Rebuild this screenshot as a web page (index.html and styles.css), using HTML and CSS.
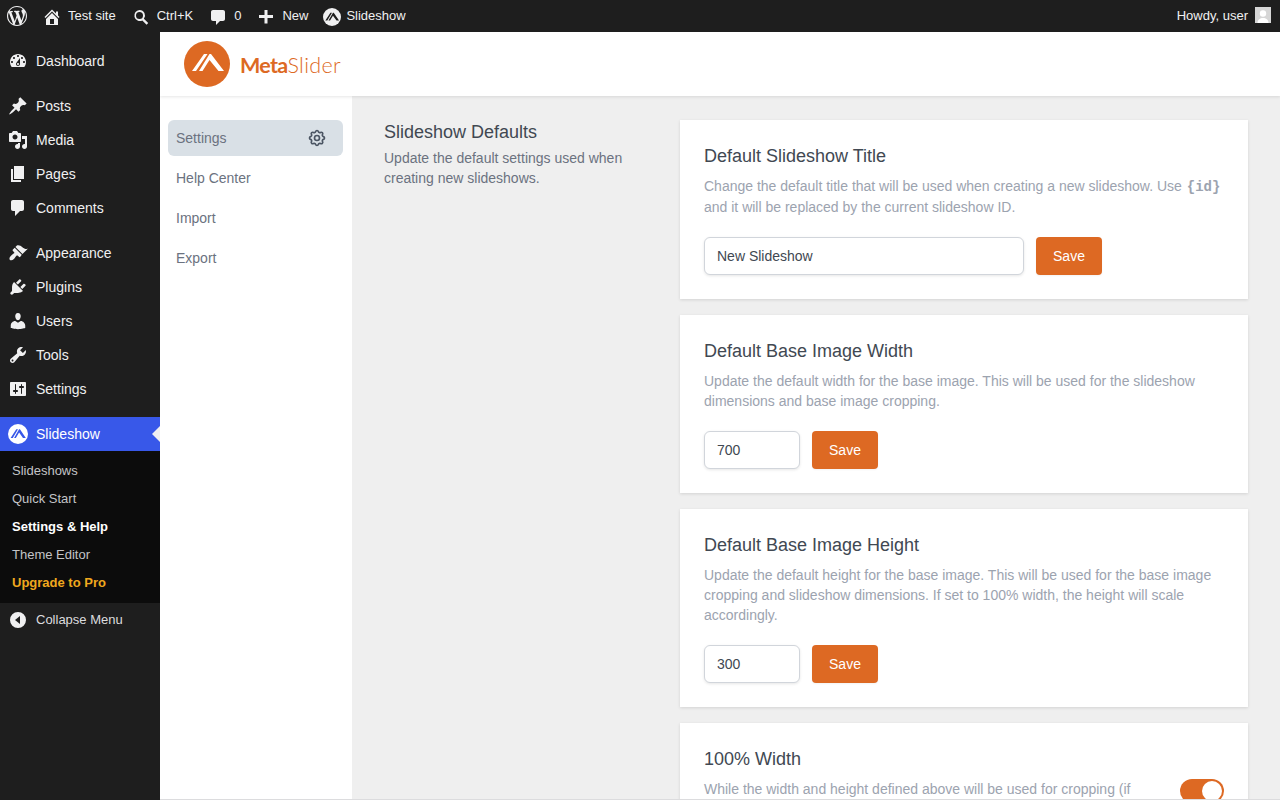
FILE: index.html
```html
<!DOCTYPE html>
<html lang="en">
<head>
<meta charset="utf-8">
<title>MetaSlider Settings</title>
<link rel="stylesheet" href="styles.css">
</head>
<body>
<header class="adminbar">
  <div class="bar-group">
    <span class="bar-item bar-wp"><svg class="ico" width="20" height="20" viewBox="0 0 20 20"><path d="M20 10c0-5.51-4.49-10-10-10C4.48 0 0 4.49 0 10c0 5.52 4.48 10 10 10 5.51 0 10-4.48 10-10zM7.78 15.37L4.37 6.22c.55-.02 1.17-.08 1.17-.08.5-.06.44-1.13-.06-1.11 0 0-1.45.11-2.37.11-.18 0-.37 0-.58-.01C4.12 2.69 6.87 1.11 10 1.11c2.33 0 4.45.87 6.05 2.34-.68-.11-1.65.39-1.65 1.58 0 .74.45 1.36.9 2.1.35.61.55 1.36.55 2.46 0 1.49-1.4 5-1.4 5l-3.03-8.37c.54-.02.82-.17.82-.17.5-.05.44-1.25-.06-1.22 0 0-1.44.12-2.38.12-.87 0-2.33-.12-2.33-.12-.5-.03-.56 1.2-.06 1.22l.92.08 1.26 3.41zM17.41 10c.24-.64.74-1.87.43-4.25.7 1.29 1.05 2.71 1.05 4.25 0 3.29-1.73 6.24-4.4 7.78.97-2.59 1.94-5.2 2.92-7.78zM6.1 18.09C3.12 16.65 1.11 13.53 1.11 10c0-1.3.23-2.48.72-3.59C3.25 10.3 4.67 14.2 6.1 18.09zm4.03-6.63l2.58 6.98c-.86.29-1.76.45-2.71.45-.79 0-1.57-.11-2.29-.33.81-2.38 1.62-4.74 2.42-7.1z"/></svg></span>
    <span class="bar-item"><svg class="ico" width="20" height="20" viewBox="0 0 20 20"><path d="M16 8.5l1.53 1.53-1.06 1.06L10 4.62l-6.47 6.47-1.06-1.06L10 2.5l4 4v-2h2v4zm-6-2.46l6 5.99V18H4v-5.97zM12 17v-5H8v5h4z"/></svg>Test site</span>
    <span class="bar-item"><svg class="ico" width="20" height="20" viewBox="0 0 20 20"><path d="M8.5 3a5.5 5.5 0 0 1 4.4 8.8l4.3 4.3-1.6 1.6-4.3-4.3A5.5 5.5 0 1 1 8.5 3zm0 2a3.5 3.5 0 1 0 0 7 3.5 3.5 0 0 0 0-7z"/></svg>Ctrl+K</span>
    <span class="bar-item"><svg class="ico" width="20" height="20" viewBox="0 0 20 20"><path d="M5 3h10c1.100 0 2 .9 2 2v7c0 1.100-.9 2-2 2h-3l-4 4v-4H5c-1.100 0-2-.9-2-2V5c0-1.100.9-2 2-2z"/></svg>0</span>
    <span class="bar-item"><svg class="ico" width="20" height="20" viewBox="0 0 20 20"><path d="M17 8v3h-5.500v5.500h-3V11H3V8h5.500V3h3v5H17z"/></svg>New</span>
    <span class="bar-item bar-ms"><svg class="ico" width="18" height="18" viewBox="0 0 46 46"><circle cx="23" cy="23" r="23"/><path class="cut-dark" d="M6 32 19 12h4L11 32zM14 32 25.500 12h2L41 32h-6.500L25.500 19.500 18 32z"/></svg>Slideshow</span>
  </div>
  <div class="bar-group">
    <span class="bar-item bar-howdy">Howdy, user<span class="avatar"><svg width="16" height="16" viewBox="0 0 16 16"><rect width="16" height="16" fill="#d6d6d6"/><circle cx="8" cy="6.500" r="3.200" fill="#fff"/><path d="M2.500 16c0-3.500 2.500-5 5.500-5s5.500 1.500 5.500 5z" fill="#fff"/></svg></span></span>
  </div>
</header>
<div class="shell">
  <nav class="sidebar">
    <ul class="menu">
      <li class="menu-item"><svg class="mi" width="20" height="20" viewBox="0 0 20 20"><path d="M3.760 16h12.480c1.100-1.370 1.760-3.110 1.760-5 0-4.420-3.580-8-8-8s-8 3.580-8 8c0 1.890.66 3.630 1.760 5zM10 4c.55 0 1 .45 1 1s-.45 1-1 1-1-.45-1-1 .45-1 1-1zM6 6c.55 0 1 .45 1 1s-.45 1-1 1-1-.45-1-1 .45-1 1-1zm8 0c.55 0 1 .45 1 1s-.45 1-1 1-1-.45-1-1 .45-1 1-1zm-5.370 5.550L12 7v6c0 1.100-.9 2-2 2s-2-.9-2-2c0-.57.24-1.080.63-1.450zM4 10c.55 0 1 .45 1 1s-.45 1-1 1-1-.45-1-1 .45-1 1-1zm12 0c.55 0 1 .45 1 1s-.45 1-1 1-1-.45-1-1 .45-1 1-1zm-5 3c0-.55-.45-1-1-1s-1 .45-1 1 .45 1 1 1 1-.45 1-1z"/></svg>Dashboard</li>
      <li class="menu-sep"></li>
      <li class="menu-item"><svg class="mi" width="20" height="20" viewBox="0 0 20 20"><path d="M10.440 3.020l1.820-1.820 6.360 6.350-1.830 1.820c-1.050-.68-2.480-.57-3.410.36l-.75.75c-.92.93-1.040 2.350-.35 3.410l-1.830 1.820-2.410-2.410-2.800 2.790c-.42.42-3.380 2.710-3.800 2.290s1.860-3.390 2.280-3.810l2.790-2.790L4.100 9.360l1.830-1.820c1.050.69 2.480.57 3.400-.36l.75-.75c.93-.92 1.050-2.350.36-3.410z"/></svg>Posts</li>
      <li class="menu-item"><svg class="mi" width="20" height="20" viewBox="0 0 20 20"><path fill-rule="evenodd" d="M13 11V4c0-.55-.45-1-1-1h-1.670L9 1H5L3.670 3H2c-.55 0-1 .45-1 1v7c0 .55.45 1 1 1h10c.55 0 1-.45 1-1zM7 4.500c1.380 0 2.500 1.120 2.500 2.500S8.380 9.500 7 9.500 4.500 8.380 4.500 7 5.620 4.500 7 4.500zM14 6h5v10.500c0 1.380-1.120 2.500-2.500 2.500S14 17.880 14 16.500s1.120-2.500 2.500-2.500c.17 0 .34.02.5.05V9h-3V6zm-4 8.050V13h2v3.500c0 1.380-1.120 2.500-2.500 2.500S7 17.880 7 16.500 8.120 14 9.500 14c.17 0 .34.02.5.05z"/></svg>Media</li>
      <li class="menu-item"><svg class="mi" width="20" height="20" viewBox="0 0 20 20"><path d="M6 15V2h10v13H6zm-1 1h8v2H3V5h2v11z"/></svg>Pages</li>
      <li class="menu-item"><svg class="mi" width="20" height="20" viewBox="0 0 20 20"><path d="M5 2h9c1.100 0 2 .9 2 2v7c0 1.100-.9 2-2 2h-2l-5 5v-5H5c-1.100 0-2-.9-2-2V4c0-1.100.9-2 2-2z"/></svg>Comments</li>
      <li class="menu-sep"></li>
      <li class="menu-item"><svg class="mi" width="20" height="20" viewBox="0 0 20 20"><path d="M14.480 11.060L7.410 3.990l1.500-1.500c.5-.56 2.300-.47 3.510.32 1.210.8 1.430 1.280 2.910 2.100 1.180.64 2.450 1.260 4.450.85zm-.71.71L6.700 4.700 4.930 6.470c-.39.39-.39 1.020 0 1.410l1.060 1.060c.39.39.39 1.030 0 1.420-.6.6-1.430 1.110-2.210 1.690-.35.26-.7.53-1.010.84-1.340 1.340-1.770 3.070-.85 3.990.92.92 2.650.49 3.990-.85.31-.31.58-.66.84-1.010.58-.78 1.090-1.610 1.690-2.210.39-.39 1.030-.39 1.420 0l1.060 1.060c.39.39 1.020.39 1.410 0z"/></svg>Appearance</li>
      <li class="menu-item"><svg class="mi" width="20" height="20" viewBox="0 0 20 20"><path d="M13.110 4.360L9.870 7.600 8 5.730l3.240-3.240c.35-.34 1.050-.2 1.560.32.52.51.66 1.210.31 1.550zm-8 1.770l.91-1.120 9.010 9.010-1.190.84c-.71.71-2.630 1.160-3.820 1.160H6.140L4.900 17.260c-.59.59-1.540.59-2.120 0-.59-.58-.59-1.530 0-2.120l1.240-1.240v-3.880c0-1.130.4-3.190 1.090-3.890zm7.260 3.970l3.240-3.240c.34-.35 1.040-.21 1.550.31.52.51.66 1.210.31 1.550l-3.240 3.250z"/></svg>Plugins</li>
      <li class="menu-item"><svg class="mi" width="20" height="20" viewBox="0 0 20 20"><path d="M10 9.250c-2.270 0-2.730-3.440-2.730-3.440C7 4.020 7.820 2 9.970 2c2.160 0 2.980 2.020 2.710 3.810 0 0-.41 3.440-2.680 3.440zm0 2.570L12.720 10c2.390 0 4.520 2.330 4.520 4.530v2.490s-3.650 1.130-7.240 1.130c-3.650 0-7.240-1.130-7.240-1.130v-2.490c0-2.250 1.940-4.480 4.470-4.480z"/></svg>Users</li>
      <li class="menu-item"><svg class="mi" width="20" height="20" viewBox="0 0 20 20"><path d="M16.680 9.770c-1.340 1.340-3.300 1.670-4.950.99l-5.410 6.520c-.99.99-2.590.99-3.580 0s-.99-2.590 0-3.570l6.520-5.420c-.68-1.650-.35-3.610.99-4.950 1.280-1.280 3.120-1.620 4.720-1.060l-2.890 2.890 2.820 2.820 2.860-2.870c.53 1.580.18 3.390-1.080 4.650zM3.810 16.210c.4.39 1.040.39 1.430 0 .4-.4.4-1.040 0-1.430-.39-.4-1.030-.4-1.430 0-.39.39-.39 1.030 0 1.430z"/></svg>Tools</li>
      <li class="menu-item"><svg class="mi" width="20" height="20" viewBox="0 0 20 20"><path d="M18 16V4c0-.55-.45-1-1-1H3c-.55 0-1 .45-1 1v12c0 .55.45 1 1 1h14c.55 0 1-.45 1-1zM8 11h1c.55 0 1 .45 1 1s-.45 1-1 1H8v1.500c0 .28-.22.5-.5.5s-.5-.22-.5-.5V13H6c-.55 0-1-.45-1-1s.45-1 1-1h1V5.500c0-.28.22-.5.5-.5s.5.22.5.5V11zm5-2h-1c-.55 0-1-.45-1-1s.45-1 1-1h1V5.500c0-.28.22-.5.5-.5s.5.22.5.5V7h1c.55 0 1 .45 1 1s-.45 1-1 1h-1v5.500c0 .28-.22.5-.5.5s-.5-.22-.5-.5V9z"/></svg>Settings</li>
      <li class="menu-sep"></li>
      <li class="menu-item is-current"><svg class="mi" width="20" height="20" viewBox="0 0 46 46"><circle cx="23" cy="23" r="23"/><path class="cut-blue" d="M6 32 19 12h4L11 32zM14 32 25.500 12h2L41 32h-6.500L25.500 19.500 18 32z"/></svg>Slideshow</li>
    </ul>
    <ul class="submenu">
      <li class="sub-item">Slideshows</li>
      <li class="sub-item">Quick Start</li>
      <li class="sub-item is-active">Settings &amp; Help</li>
      <li class="sub-item">Theme Editor</li>
      <li class="sub-item is-upgrade">Upgrade to Pro</li>
    </ul>
    <div class="collapse"><svg class="mi" width="20" height="20" viewBox="0 0 20 20"><path d="M10 2a8 8 0 1 1 0 16 8 8 0 0 1 0-16zm2 4-5 4 5 4z"/></svg>Collapse Menu</div>
  </nav>
  <main class="main">
    <div class="topbar">
      <svg width="46" height="46" viewBox="0 0 46 46"><circle cx="23" cy="23" r="23" fill="#dd6923"/><path fill="#fff" d="M8 30 20 13h3.500L12 30zM15 30 25.500 13H27l13 17h-5.500L25.500 19 18.500 30z"/></svg>
      <span class="brand"><b>Meta</b>Slider</span>
    </div>
    <div class="body">
      <aside class="subnav">
        <div class="subnav-item is-selected">Settings<svg width="20" height="20" viewBox="0 0 24 24" fill="none" stroke="#4b5563" stroke-width="2" stroke-linecap="round" stroke-linejoin="round"><path d="M10.325 4.317c.426-1.756 2.924-1.756 3.350 0a1.724 1.724 0 002.573 1.066c1.543-.94 3.310.826 2.370 2.370a1.724 1.724 0 001.065 2.572c1.756.426 1.756 2.924 0 3.350a1.724 1.724 0 00-1.066 2.573c.94 1.543-.826 3.310-2.370 2.370a1.724 1.724 0 00-2.572 1.065c-.426 1.756-2.924 1.756-3.350 0a1.724 1.724 0 00-2.573-1.066c-1.543.94-3.310-.826-2.370-2.370a1.724 1.724 0 00-1.065-2.572c-1.756-.426-1.756-2.924 0-3.350a1.724 1.724 0 001.066-2.573c-.94-1.543.826-3.310 2.370-2.370.996.608 2.296.07 2.572-1.065z"/><path d="M15 12a3 3 0 11-6 0 3 3 0 016 0z"/></svg></div>
        <div class="subnav-item">Help Center</div>
        <div class="subnav-item">Import</div>
        <div class="subnav-item">Export</div>
      </aside>
      <section class="content">
        <div class="intro">
          <h2>Slideshow Defaults</h2>
          <p>Update the default settings used when creating new slideshows.</p>
        </div>
        <div class="cards">
          <article class="card">
            <h3>Default Slideshow Title</h3>
            <p>Change the default title that will be used when creating a new slideshow. Use <code>{id}</code> and it will be replaced by the current slideshow ID.</p>
            <div class="row"><input class="field field-wide" type="text" value="New Slideshow"><button class="save" type="button">Save</button></div>
          </article>
          <article class="card">
            <h3>Default Base Image Width</h3>
            <p>Update the default width for the base image. This will be used for the slideshow dimensions and base image cropping.</p>
            <div class="row"><input class="field field-num" type="text" value="700"><button class="save" type="button">Save</button></div>
          </article>
          <article class="card">
            <h3>Default Base Image Height</h3>
            <p>Update the default height for the base image. This will be used for the base image cropping and slideshow dimensions. If set to 100% width, the height will scale accordingly.</p>
            <div class="row"><input class="field field-num" type="text" value="300"><button class="save" type="button">Save</button></div>
          </article>
          <article class="card card-toggle">
            <div class="toggle-text">
              <h3>100% Width</h3>
              <p>While the width and height defined above will be used for cropping (if</p>
            </div>
            <span class="toggle"><span class="knob"></span></span>
          </article>
        </div>
      </section>
    </div>
  </main>
</div>
</body>
</html>
```
FILE: styles.css
```css
* { box-sizing: border-box; }
html, body { margin: 0; height: 100%; overflow: hidden; }
body { font-family: "Liberation Sans", Arial, sans-serif; background: #f0f0f1; display: flex; flex-direction: column; height: 800px; }
ul { list-style: none; margin: 0; padding: 0; }
h2, h3, p { margin: 0; font-weight: 400; }

.adminbar { flex: 0 0 32px; height: 32px; background: #1e1e1e; color: #f0f0f1; display: flex; justify-content: space-between; font-size: 13px; }
.bar-group { display: flex; }
.bar-item { display: flex; align-items: center; height: 32px; padding: 0 8px 2px 7px; white-space: nowrap; }
.ico { fill: #f0f0f1; margin: 4px 6px 0 0; flex: none; }
.bar-wp { padding: 0 8px 0 7px; }
.bar-wp .ico { margin: 0; }
.bar-ms .ico { margin-right: 5px; }
.cut-dark { fill: #1e1e1e; }
.bar-howdy { padding: 0 9px 2px 8px; }
.avatar { display: block; width: 16px; height: 16px; margin-left: 7px; line-height: 0; }

.shell { flex: 1; display: flex; min-height: 0; }
.sidebar { flex: 0 0 160px; background: #1e1e1e; color: #f0f0f1; padding-top: 12px; font-size: 14px; }
.menu-item { display: flex; align-items: center; height: 34px; padding-left: 8px; position: relative; }
.mi { fill: #f0f0f1; margin-right: 8px; flex: none; }
.menu-sep { height: 11px; }
.is-current { background: #3858e9; color: #fff; }
.is-current .mi { fill: #fff; }
.cut-blue { fill: #3858e9; }
.is-current::after { content: ""; position: absolute; right: 0; top: 50%; margin-top: -8px; border: 8px solid transparent; border-right-color: #f0f0f1; }
.submenu { background: #0c0c0c; padding: 6px 0; font-size: 13px; color: #c3c4c7; }
.sub-item { height: 28px; line-height: 28px; padding-left: 12px; }
.is-active { color: #fff; font-weight: 700; }
.is-upgrade { color: #f0a81e; font-weight: 700; }
.collapse { display: flex; align-items: center; height: 34px; padding: 0 0 2px 8px; font-size: 13px; color: #dcdcde; }
.collapse .mi { margin-top: 2px; }

.main { flex: 1; display: flex; flex-direction: column; min-width: 0; overflow: hidden; border-bottom: 1px solid #dcdcde; }
.topbar { flex: 0 0 64px; background: #fff; display: flex; align-items: center; padding-left: 24px; box-shadow: 0 1px 3px rgba(0,0,0,.1); position: relative; }
.brand { font-family: Lato, sans-serif; font-weight: 300; font-size: 21.500px; letter-spacing: .35px; color: #dd6923; margin: 2px 0 0 10px; }
.brand b { font-weight: 700; letter-spacing: -.7px; }
.body { flex: 1; display: flex; min-height: 0; }
.subnav { flex: 0 0 192px; background: #fff; padding: 24px 9px 0 8px; display: flex; flex-direction: column; gap: 4px; font-size: 14px; color: #6b7280; }
.subnav-item { display: flex; align-items: center; justify-content: space-between; height: 36px; padding: 0 16px 0 8px; border-radius: 6px; }
.is-selected { background: #d9e0e6; }
.content { flex: 1; display: flex; gap: 32px; padding: 24px 32px; align-items: flex-start; min-width: 0; background: #efefef; }
.intro { flex: 0 0 264px; }
.intro h2 { font-size: 18px; line-height: 24px; color: #414852; }
.intro p { font-size: 14px; line-height: 20px; color: #6b7280; margin-top: 4px; }
.cards { flex: 1; display: flex; flex-direction: column; gap: 16px; }
.card { background: #fff; padding: 24px; box-shadow: 0 1px 3px rgba(0,0,0,.12); }
.card h3 { font-size: 18px; line-height: 24px; color: #414852; }
.card p { font-size: 14px; line-height: 20px; color: #9ca3af; margin-top: 8px; }
.card code { font-family: "Liberation Mono", monospace; font-weight: 700; font-size: 14px; margin-left: 1px; }
.row { display: flex; gap: 12px; margin-top: 20px; }
.field { height: 38px; border: 1px solid #d1d5db; border-radius: 6px; background: #fff; padding: 0 12px; font: 14px "Liberation Sans", sans-serif; color: #414852; box-shadow: 0 1px 3px rgba(0,0,0,.1); }
.field-wide { width: 320px; }
.field-num { width: 96px; }
.save { width: 66px; height: 38px; border: 0; border-radius: 4px; background: #dd6923; color: #fff; font: 14px "Liberation Sans", sans-serif; box-shadow: 0 1px 2px rgba(0,0,0,.05); }
.card-toggle { display: flex; justify-content: space-between; gap: 48px; }
.toggle-text { flex: 1; }
.toggle { flex: none; width: 44px; height: 24px; border-radius: 12px; background: #dd6923; padding: 2px; margin-top: 32px; display: flex; justify-content: flex-end; }
.knob { width: 20px; height: 20px; border-radius: 50%; background: #fff; }
```
